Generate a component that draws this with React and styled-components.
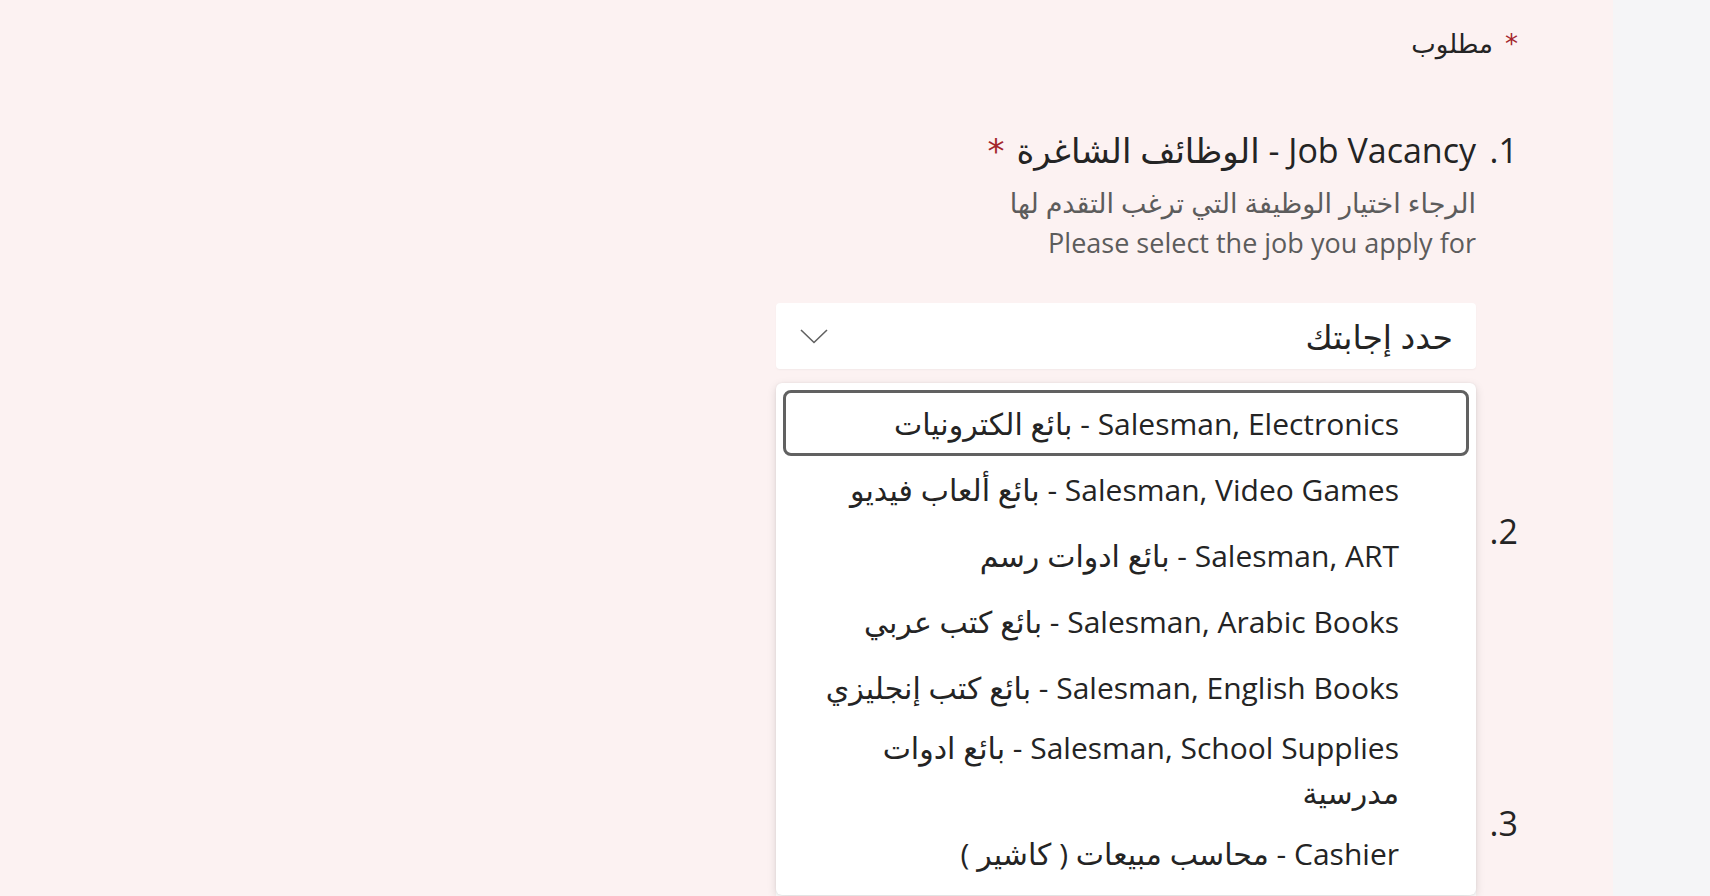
import React from 'react';
import styled, { createGlobalStyle } from 'styled-components';

const GlobalStyle = createGlobalStyle`
    html, body {
        margin: 0;
        padding: 0;
        height: 100%;
        overflow: hidden;
    }

    body {
        font-family: "Open Sans", "DejaVu Sans", sans-serif;
        color: #242424;
    }
`;

const Page = styled.div`
    display: flex;
    height: 896px;
    overflow: hidden;
`;

const Main = styled.main`
    flex: 1;
    direction: rtl;
    background: #fcf2f2;
    padding: 25px 95px 0 0;
    box-sizing: border-box;
`;

const Sidebar = styled.aside`
    width: 97px;
    background: #f5f5f7;
`;

const Required = styled.div`
    font-size: 26px;
    line-height: 36px;
    margin-bottom: 64px;
`;

const Star = styled.span`
    font-family: "DejaVu Sans", sans-serif;
    color: #a4262c;
    margin: ${props => props.margin || '0 0 0 12px'};
`;

const Question = styled.section`
    display: flex;
    margin-bottom: 138px;
`;

const Number = styled.div`
    width: 42px;
    flex-shrink: 0;
    font-size: 34px;
    line-height: 48px;
`;

const Body = styled.div`
    width: 700px;
`;

const Title = styled.h2`
    margin: 0;
    font-size: 34px;
    line-height: 48px;
    font-weight: 400;
`;

const Description = styled.p`
    margin: 8px 0 0;
    font-size: 27px;
    line-height: 40px;
    color: #5c5c5c;
`;

const SelectWrap = styled.div`
    position: relative;
    margin-top: 40px;
`;

const Select = styled.div`
    display: flex;
    align-items: center;
    justify-content: space-between;
    height: 66px;
    padding: 0 23px 0 24px;
    background: #ffffff;
    border-radius: 4px;
    box-shadow: 0 1px 2px rgba(0, 0, 0, 0.04);
    font-size: 33px;
`;

const Input = styled.div`
    height: 66px;
    margin-top: 40px;
    background: #ffffff;
    border-radius: 4px;
`;

const Menu = styled.ul`
    position: absolute;
    top: calc(100% + 14px);
    right: 0;
    left: 0;
    margin: 0;
    padding: 7px 7px 9px;
    list-style: none;
    background: #ffffff;
    border-radius: 6px;
    box-shadow: 0 3px 10px rgba(0, 0, 0, 0.13), 0 0 2px rgba(0, 0, 0, 0.08);
    z-index: 2;
`;

const Option = styled.li`
    display: flex;
    align-items: center;
    min-height: 66px;
    box-sizing: border-box;
    padding: 2px 67px 2px 8px;
    border: 3px solid ${props => (props.focused ? '#616161' : 'transparent')};
    border-radius: 8px;
    font-size: 30px;
    line-height: 45px;
`;

const Chevron = () => (
    <svg width="28" height="15" viewBox="0 0 28 15">
        <polyline points="1,1 14,13.5 27,1" fill="none" stroke="#616161" strokeWidth="1.6" />
    </svg>
);

const jobs = [
    'Salesman, Electronics - بائع الكترونيات',
    'Salesman, Video Games - بائع ألعاب فيديو',
    'Salesman, ART - بائع ادوات رسم',
    'Salesman, Arabic Books - بائع كتب عربي',
    'Salesman, English Books - بائع كتب إنجليزي',
    'Salesman, School Supplies - بائع ادوات مدرسية',
    'Cashier - محاسب مبيعات ( كاشير )',
];

const App = () => (
    <>
        <GlobalStyle />
        <Page>
            <Main>
                <Required>
                    <Star>*</Star>
                    مطلوب
                </Required>

                <Question>
                    <Number>1.</Number>
                    <Body>
                        <Title>
                            Job Vacancy - الوظائف الشاغرة
                            <Star margin="0 12px 0 0">*</Star>
                        </Title>
                        <Description>
                            الرجاء اختيار الوظيفة التي ترغب التقدم لها
                            <br />
                            Please select the job you apply for
                        </Description>
                        <SelectWrap>
                            <Select>
                                <span>حدد إجابتك</span>
                                <Chevron />
                            </Select>
                            <Menu>
                                {jobs.map((job, i) => (
                                    <Option key={job} focused={i === 0}>{job}</Option>
                                ))}
                            </Menu>
                        </SelectWrap>
                    </Body>
                </Question>

                <Question>
                    <Number>2.</Number>
                    <Body>
                        <Title>الاسم</Title>
                        <Input />
                    </Body>
                </Question>

                <Question>
                    <Number>3.</Number>
                    <Body>
                        <Title>العمر</Title>
                        <Input />
                    </Body>
                </Question>
            </Main>
            <Sidebar />
        </Page>
    </>
);

export default App;
